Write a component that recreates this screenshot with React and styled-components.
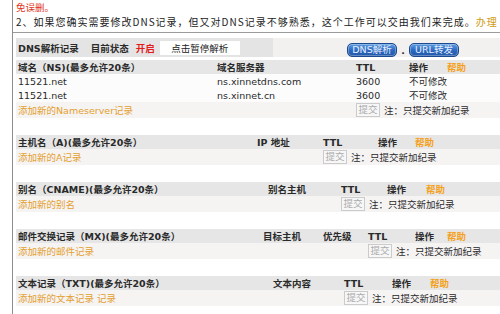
import React from 'react';
import styled, { createGlobalStyle } from 'styled-components';

const GlobalStyle = createGlobalStyle`
  html, body {
    margin: 0;
    padding: 0;
    background: #fff;
  }
  body {
    width: 500px;
    height: 314px;
    overflow: hidden;
    font-family: "DejaVu Sans", "Noto Sans CJK SC", sans-serif;
    font-size: 9.5px;
    color: #2a2a2a;
  }
`;

const Page = styled.div`
  margin-left: 12px;
  border-left: 1px solid #8e8e8e;
  height: 314px;
  box-sizing: border-box;
  overflow: hidden;
`;

const Notice = styled.div`
  padding: 0 0 2px 3px;
  border-bottom: 1px solid #9c9c9c;
  white-space: nowrap;
  overflow: hidden;
  font-family: "Noto Sans CJK SC", sans-serif;
`;

const Warn = styled.div`
  height: 14px;
  line-height: 14px;
  color: #e2341d;
  font-size: 9.5px;
`;

const Tip = styled.div`
  height: 16px;
  line-height: 16px;
  font-size: 10px;
  letter-spacing: 1px;
  color: #222;
`;

const Gold = styled.span`
  color: #cf9a12;
`;

const Content = styled.div`
  padding: 5px 0 0 3px;
`;

const DnsBar = styled.div`
  display: flex;
  height: 19px;
  margin-bottom: 3px;
`;

const BarLeft = styled.div`
  width: 257px;
  display: flex;
  align-items: center;
  background: #e4e4e4;
  padding-left: 2px;
  box-sizing: border-box;
  font-weight: bold;
  white-space: nowrap;
`;

const BarRight = styled.div`
  flex: 1;
  display: flex;
  align-items: center;
  background: #f3f0f0;
  padding-left: 74px;
`;

const Status = styled.span`
  margin-left: ${p => p.$gap}px;
  color: ${p => p.$color || 'inherit'};
`;

const PauseButton = styled.button`
  margin-left: 5px;
  width: 80px;
  height: 14px;
  padding: 0;
  border: none;
  background: #fff;
  font-family: inherit;
  font-size: 9.5px;
  color: #222;
`;

const BlueButton = styled.button`
  width: 50px;
  height: 14px;
  padding: 0;
  border: 1px solid #1b4a8e;
  border-radius: 5px;
  background: linear-gradient(#5f9de0, #2a67bf 55%, #2359a8);
  box-shadow: inset 0 0 0 1px rgba(255, 255, 255, 0.3);
  color: #e6efff;
  font-family: "DejaVu Sans", "Noto Sans CJK SC", sans-serif;
  font-size: 9.5px;
  line-height: 12px;
  margin-top: 4px;
`;

const Dot = styled.span`
  width: 12px;
  text-align: center;
  align-self: flex-end;
  line-height: 12px;
  font-weight: bold;
`;

const Section = styled.div`
  & + & {
    margin-top: 17px;
  }
`;

const Row = styled.div`
  display: grid;
  grid-template-columns: ${p => p.$cols};
  height: ${p => p.$h}px;
  align-items: center;
  background: ${p => p.$bg};
  font-weight: ${p => (p.$head ? 'bold' : 'normal')};
`;

const Cell = styled.div`
  padding-left: 2px;
  white-space: nowrap;
  display: flex;
  align-items: center;
  grid-column: ${p => p.$span || 'auto'};
`;

const Help = styled.span`
  margin-left: ${p => p.$gap}px;
  color: #f4a11c;
`;

const AddLink = styled.span`
  color: #e49f2e;
`;

const Submit = styled.button`
  width: 24px;
  height: 14px;
  padding: 0;
  box-sizing: border-box;
  border: 1px solid #cbcbcb;
  background: #f7f7f7;
  color: #ababab;
  font-family: inherit;
  font-size: 9.5px;
  line-height: 12px;
`;

const Note = styled.span`
  margin-left: 4px;
  color: #2a2a2a;
`;

const sections = [
  {
    cols: '199px 139px 53px 1fr',
    head: ['域名（NS)(最多允许20条）', '域名服务器', 'TTL'],
    helpGap: 19,
    rows: [
      ['11521.net', 'ns.xinnetdns.com', '3600', '不可修改'],
      ['11521.net', 'ns.xinnet.cn', '3600', '不可修改'],
    ],
    add: '添加新的Nameserver记录',
    submitCol: 3,
  },
  {
    cols: '239px 66px 55px 1fr',
    head: ['主机名（A)(最多允许20条）', 'IP 地址', 'TTL'],
    helpGap: 18,
    rows: [],
    add: '添加新的A记录',
    submitCol: 3,
  },
  {
    cols: '250px 73px 46px 1fr',
    head: ['别名（CNAME)(最多允许20条）', '别名主机', 'TTL'],
    helpGap: 20,
    rows: [],
    add: '添加新的别名',
    submitCol: 3,
  },
  {
    cols: '245px 60px 45px 47px 1fr',
    head: ['邮件交换记录（MX)(最多允许20条）', '目标主机', '优先级', 'TTL'],
    helpGap: 13,
    rows: [],
    add: '添加新的邮件记录',
    submitCol: 4,
  },
  {
    cols: '255px 71px 48px 1fr',
    head: ['文本记录（TXT)(最多允许20条）', '文本内容', 'TTL'],
    helpGap: 19,
    rows: [],
    add: '添加新的文本记录 记录',
    submitCol: 3,
  },
];

function RecordSection({ data }) {
  return (
    <Section>
      <Row $cols={data.cols} $h={14} $bg="#e6e6e6" $head>
        {data.head.map(h => (
          <Cell key={h}>{h}</Cell>
        ))}
        <Cell>
          操作<Help $gap={data.helpGap}>帮助</Help>
        </Cell>
      </Row>
      {data.rows.map((r, i) => (
        <Row key={i} $cols={data.cols} $h={14} $bg="#fcfcfc">
          {r.map((c, j) => (
            <Cell key={j}>{c}</Cell>
          ))}
        </Row>
      ))}
      <Row $cols={data.cols} $h={16} $bg="#f6f3f3">
        <Cell $span={`1 / ${data.submitCol}`}>
          <AddLink>{data.add}</AddLink>
        </Cell>
        <Cell $span={`${data.submitCol} / -1`}>
          <Submit disabled>提交</Submit>
          <Note>注：只提交新加纪录</Note>
        </Cell>
      </Row>
    </Section>
  );
}

export default function App() {
  return (
    <>
      <GlobalStyle />
      <Page>
        <Notice>
          <Warn>免误删。</Warn>
          <Tip>
            2、如果您确实需要修改DNS记录，但又对DNS记录不够熟悉，这个工作可以交由我们来完成。<Gold>办理</Gold>
          </Tip>
        </Notice>
        <Content>
          <DnsBar>
            <BarLeft>
              DNS解析记录
              <Status $gap={12}>目前状态</Status>
              <Status $gap={7} $color="#e31b1b">开启</Status>
              <PauseButton>点击暂停解析</PauseButton>
            </BarLeft>
            <BarRight>
              <BlueButton>DNS解析</BlueButton>
              <Dot>.</Dot>
              <BlueButton>URL转发</BlueButton>
            </BarRight>
          </DnsBar>
          {sections.map(s => (
            <RecordSection key={s.add} data={s} />
          ))}
        </Content>
      </Page>
    </>
  );
}
